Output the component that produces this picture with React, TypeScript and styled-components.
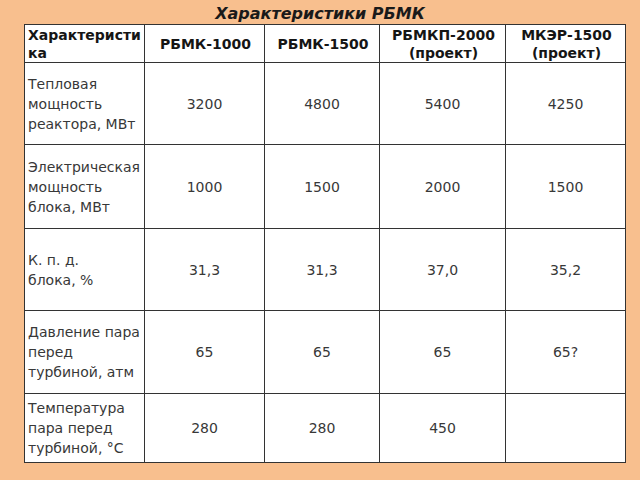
import styled, { createGlobalStyle } from 'styled-components'

const GlobalStyle = createGlobalStyle`
  html, body {
    margin: 0;
    padding: 0;
    background: #f8bf8e;
  }
  body {
    font-family: 'DejaVu Sans', Verdana, sans-serif;
  }
`

const Page = styled.div`
  width: 640px;
  height: 480px;
  box-sizing: border-box;
  padding-left: 24px;
  background: #f8bf8e;
  overflow: hidden;
`

const Title = styled.h1`
  margin: 0 0 0 -24px;
  height: 24px;
  line-height: 27px;
  font-size: 16px;
  font-weight: bold;
  font-style: italic;
  text-align: center;
  color: #1a1a1a;
`

const Table = styled.table`
  border-collapse: collapse;
  table-layout: fixed;
  background: #ffffff;
  border: 1px solid #333;
`

const Row = styled.tr<{ $h: number }>`
  height: ${(p) => p.$h}px;
`

const HeadCell = styled.th<{ $breakAll?: boolean; $left?: boolean }>`
  border: 1px solid #333;
  padding: 0 1px 0 3px;
  font-size: 14px;
  line-height: 18px;
  font-weight: bold;
  color: #151515;
  vertical-align: middle;
  text-align: ${(p) => (p.$left ? 'left' : 'center')};
  word-break: ${(p) => (p.$breakAll ? 'break-all' : 'normal')};
`

const LabelCell = styled.td`
  border: 1px solid #333;
  padding: 0 1px 0 3px;
  font-size: 14px;
  line-height: 20px;
  color: #383838;
  white-space: nowrap;
  vertical-align: middle;
  text-align: left;
`

const ValueCell = styled.td`
  border: 1px solid #333;
  padding: 0;
  font-size: 14px;
  line-height: 20px;
  color: #383838;
  text-align: center;
  vertical-align: middle;
`

const widths = [120, 120, 115, 126, 120]

const rows: { label: string[]; values: string[]; h: number }[] = [
  { label: ['Тепловая', 'мощность', 'реактора, МВт'], values: ['3200', '4800', '5400', '4250'], h: 82 },
  { label: ['Электрическая', 'мощность', 'блока, МВт'], values: ['1000', '1500', '2000', '1500'], h: 84 },
  { label: ['К. п. д.', 'блока, %'], values: ['31,3', '31,3', '37,0', '35,2'], h: 82 },
  { label: ['Давление пара', 'перед', 'турбиной, атм'], values: ['65', '65', '65', '65?'], h: 83 },
  { label: ['Температура', 'пара перед', 'турбиной, °С'], values: ['280', '280', '450', ''], h: 69 },
]

export default function App() {
  return (
    <Page>
      <GlobalStyle />
      <Title>Характеристики РБМК</Title>
      <Table>
        <colgroup>
          {widths.map((w, i) => (
            <col key={i} style={{ width: w }} />
          ))}
        </colgroup>
        <thead>
          <Row $h={38}>
            <HeadCell $breakAll $left>Характеристика</HeadCell>
            <HeadCell>РБМК-1000</HeadCell>
            <HeadCell>РБМК-1500</HeadCell>
            <HeadCell>
              РБМКП-2000
              <br />
              (проект)
            </HeadCell>
            <HeadCell>
              МКЭР-1500
              <br />
              (проект)
            </HeadCell>
          </Row>
        </thead>
        <tbody>
          {rows.map((r, i) => (
            <Row key={i} $h={r.h}>
              <LabelCell>
                {r.label.map((l, j) => (
                  <span key={j}>
                    {j > 0 && <br />}
                    {l}
                  </span>
                ))}
              </LabelCell>
              {r.values.map((v, j) => (
                <ValueCell key={j}>{v}</ValueCell>
              ))}
            </Row>
          ))}
        </tbody>
      </Table>
    </Page>
  )
}
